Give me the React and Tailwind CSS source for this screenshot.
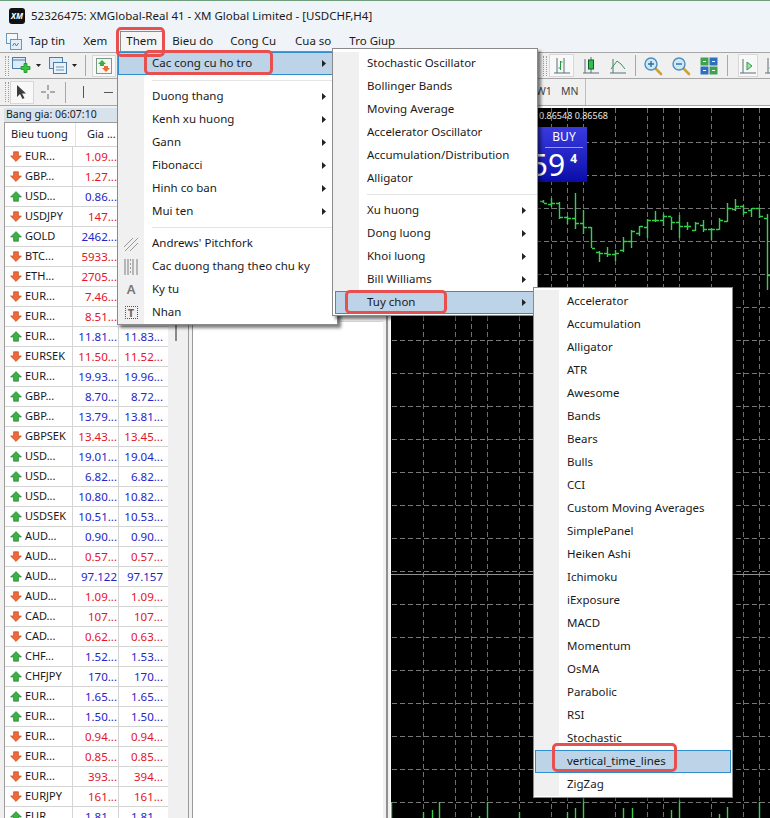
import React from "react";

const rows = [
  ["EUR...", 0, "1.09...", ""], ["GBP...", 0, "1.27...", ""], ["USD...", 1, "0.86...", ""],
  ["USDJPY", 0, "147...", ""], ["GOLD", 1, "2462...", ""], ["BTC...", 0, "5933...", ""],
  ["ETH...", 0, "2705...", ""], ["EUR...", 0, "7.46...", ""], ["EUR...", 0, "8.51...", ""],
  ["EUR...", 1, "11.81...", "11.83..."], ["EURSEK", 0, "11.50...", "11.52..."], ["EUR...", 1, "19.93...", "19.96..."],
  ["GBP...", 1, "8.70...", "8.72..."], ["GBP...", 1, "13.79...", "13.81..."], ["GBPSEK", 0, "13.43...", "13.45..."],
  ["USD...", 1, "19.01...", "19.04..."], ["USD...", 1, "6.82...", "6.82..."], ["USD...", 1, "10.80...", "10.82..."],
  ["USDSEK", 1, "10.51...", "10.53..."], ["AUD...", 1, "0.90...", "0.90..."], ["AUD...", 0, "0.57...", "0.57..."],
  ["AUD...", 1, "97.122", "97.157"], ["AUD...", 0, "1.09...", "1.09..."], ["CAD...", 0, "107...", "107..."],
  ["CAD...", 0, "0.62...", "0.63..."], ["CHF...", 1, "1.52...", "1.53..."], ["CHFJPY", 1, "170...", "170..."],
  ["EUR...", 1, "1.65...", "1.65..."], ["EUR...", 1, "1.50...", "1.50..."], ["EUR...", 0, "0.94...", "0.94..."],
  ["EUR...", 0, "0.85...", "0.85..."], ["EUR...", 0, "393...", "394..."], ["EURJPY", 0, "161...", "161..."],
  ["EUR...", 1, "1.81...", "1.81..."],
];

// [x, top, bottom, open, close] in page pixels
const bars = [
  [543, 200, 203, 201, 203], [551, 198, 207, 204, 203], [559, 202, 219, 203, 217], [567, 216, 224, 217, 218],
  [575, 193, 229, 218, 223], [583, 210, 234, 223, 227], [591, 227, 248, 227, 248], [599, 251, 262, 252, 253],
  [607, 247, 257, 253, 254], [615, 250, 261, 254, 253], [623, 237, 252, 250, 241], [631, 230, 248, 241, 231],
  [639, 226, 236, 233, 226], [647, 219, 238, 227, 220], [655, 211, 222, 220, 220], [663, 214, 226, 220, 216],
  [671, 217, 230, 216, 222], [679, 215, 238, 222, 226], [687, 222, 230, 226, 226], [695, 222, 231, 230, 223],
  [703, 220, 232, 225, 229], [711, 228, 240, 229, 229], [719, 218, 230, 229, 220], [727, 203, 222, 221, 208],
  [735, 199, 211, 209, 206], [743, 205, 215, 206, 212], [751, 208, 217, 210, 208], [759, 208, 218, 208, 216],
  [767, 214, 290, 218, 275],
];
const lowBars = [
  [391, 802], [423, 812], [432, 810], [439, 802], [479, 816], [487, 802], [519, 812], [567, 812], [575, 808],
  [583, 798], [623, 808], [632, 808], [671, 810], [679, 800], [719, 814], [727, 807], [759, 802],
];
const hLines = [142, 175, 208, 241, 274, 307, 340, 373, 406, 439, 472, 505, 538, 571, 604, 637, 670, 703, 736, 769, 802];

const ArrowUp = () => (
  <svg width="12" height="11" viewBox="0 0 12 11" className="shrink-0">
    <path d="M6 .6 11.4 6H8.4V10.2H3.6V6H.6Z" fill="#3cb043" stroke="#1f7f34" strokeWidth=".7" />
  </svg>
);

const ArrowDown = () => (
  <svg width="12" height="11" viewBox="0 0 12 11" className="shrink-0">
    <path d="M6 10.4 11.4 5H8.4V.8H3.6V5H.6Z" fill="#f0693a" stroke="#bd4a1e" strokeWidth=".7" />
  </svg>
);

const Caret = () => (
  <svg width="5" height="3" viewBox="0 0 5 3" className="ml-[5px] shrink-0">
    <path d="M0 0H5L2.5 3Z" fill="#222" />
  </svg>
);

const Grip = () => <div className="w-[4px] h-[20px] border-x border-dotted border-[#9a9a9a] shrink-0" />;
const Sep = () => <div className="w-px h-[21px] bg-[#a8a8a8] shrink-0" />;

const ChartBars = () => (
  <svg width="20" height="20" viewBox="0 0 20 20">
    <path d="M2 17H18M5 17V2M12 17V2" stroke="#58707a" fill="none" />
    <path d="M8.5 5V14M8.5 12H6.5M8.5 6H10.5" stroke="#1e9c3e" fill="none" />
  </svg>
);

const Candle = () => (
  <svg width="20" height="20" viewBox="0 0 20 20">
    <path d="M2 17H18M4 17V3M10 17V1" stroke="#58707a" fill="none" />
    <rect x="7.5" y="4" width="5" height="9" fill="#2fc04e" stroke="#145c26" />
  </svg>
);

const LineChart = () => (
  <svg width="20" height="20" viewBox="0 0 20 20">
    <path d="M2 17H18M5 17V3" stroke="#58707a" fill="none" />
    <path d="M3 13 9 5 13 8 17 13" stroke="#2f9f49" fill="none" />
  </svg>
);

const Magnifier = ({ plus }) => (
  <svg width="20" height="20" viewBox="0 0 20 20">
    <path d="M12 12 18 18" stroke="#c9a33a" strokeWidth="2.6" strokeLinecap="round" />
    <circle cx="8" cy="8" r="6" fill="#cfe8f7" stroke="#4d8fbd" strokeWidth="1.4" />
    <path d={plus ? "M5 8H11M8 5V11" : "M5 8H11"} stroke="#2a6f9f" strokeWidth="1.4" />
  </svg>
);

const Tile = () => (
  <svg width="18" height="18" viewBox="0 0 18 18">
    <rect x=".5" y=".5" width="8" height="8" fill="#3fa34d" />
    <rect x="9.5" y=".5" width="8" height="8" fill="#2e6fc0" />
    <rect x=".5" y="9.5" width="8" height="8" fill="#2e6fc0" />
    <rect x="9.5" y="9.5" width="8" height="8" fill="#3fa34d" />
    <path d="M3 4.5H6M12 4.5H15M3 13.5H6M12 13.5H15" stroke="#fff" />
  </svg>
);

const Shift = () => (
  <svg width="18" height="20" viewBox="0 0 18 20">
    <path d="M1 17H17M4 17V3" stroke="#58707a" fill="none" />
    <path d="M8 6 13 10 8 14Z" fill="#a5e0a5" stroke="#2f9f49" />
  </svg>
);

const NewChart = () => (
  <svg width="19" height="18" viewBox="0 0 19 18" className="shrink-0">
    <rect x=".5" y=".5" width="13" height="11" fill="#dcebf7" stroke="#4b7ea8" />
    <path d="M.5 3H13.5" stroke="#4b7ea8" />
    <path d="M9 9.5H12V6.5H15V9.5H18V12.5H15V15.5H12V12.5H9Z" fill="#38c63f" stroke="#1d8a2d" strokeWidth=".8" />
  </svg>
);

const Profiles = () => (
  <svg width="18" height="18" viewBox="0 0 18 18" className="shrink-0">
    <rect x=".5" y=".5" width="13" height="11" fill="#dcebf7" stroke="#4b7ea8" />
    <rect x="4.5" y="5.5" width="13" height="11" fill="#e8f2fa" stroke="#4b7ea8" />
    <path d="M7 10H15M7 13H15" stroke="#6b93b5" />
  </svg>
);

const Watch = () => (
  <svg width="16" height="16" viewBox="0 0 16 16">
    <rect x=".5" y=".5" width="15" height="15" fill="#f2f7f2" stroke="#7a9a88" />
    <path d="M6 2 10 6H8V8H4V6H2Z" fill="#3cb043" />
    <path d="M10 14 14 10H12V8H8V10H6Z" fill="#f0693a" />
  </svg>
);

const AppIcon = () => (
  <svg width="16" height="18" viewBox="0 0 16 18" className="shrink-0">
    <rect x=".5" y=".5" width="11" height="10" fill="#f3f8fc" stroke="#6d93b5" />
    <rect x="4.5" y="6.5" width="11" height="10" fill="#e3eff8" stroke="#6d93b5" />
    <path d="M6.5 13 8.5 10 10.5 13 12.5 10" stroke="#4d7fa8" fill="none" />
  </svg>
);

const Pitchfork = () => (
  <svg width="16" height="16" viewBox="0 0 16 16">
    <path d="M1 11 10 2M2 15 15 2M7 15 15 7" stroke="#9a9a9a" fill="none" />
  </svg>
);

const Cycles = () => (
  <svg width="16" height="18" viewBox="0 0 16 18">
    <path d="M2 1V17M5 1V17M10 1V17M14 1V17" stroke="#7d7d7d" fill="none" />
    <path d="M7.5 1V17" stroke="#9a9a9a" strokeDasharray="2 2" />
  </svg>
);

const Submenu = () => (
  <svg width="4" height="7" viewBox="0 0 4 7" className="shrink-0">
    <path d="M0 0 4 3.5 0 7Z" fill="#222" />
  </svg>
);

const MenuItem = ({ label, arrow, active, icon, gutter, text, arrowRight }) => (
  <div className={`flex items-center h-[23px] ${active ? "bg-[#bdd3e7] outline outline-1 -outline-offset-1 outline-[#2f8ecb]" : ""}`}>
    <div className={`${gutter} h-full flex items-center justify-center shrink-0 ${active ? "" : "bg-[#f0f0f0]"}`}>
      {icon}
    </div>
    <span className={`${text} flex-1 whitespace-nowrap pb-[2px]`}>{label}</span>
    {arrow && <div className={arrowRight}><Submenu /></div>}
  </div>
);

const MenuSep = ({ gutter, h }) => (
  <div className={`flex ${h}`}>
    <div className={`${gutter} bg-[#f0f0f0] shrink-0`} />
    <div className="flex-1 flex items-center ml-2">
      <div className="w-full h-px bg-[#e4e4e4]" />
    </div>
  </div>
);

const Box = ({ className }) => (
  <div className={`absolute border-[3px] border-[#e8504f] rounded-[5px] pointer-events-none ${className}`} />
);

const App = () => {
  const m1 = { gutter: "w-[26px]", text: "pl-[8px]", arrowRight: "pr-[11px]" };
  const m2 = { gutter: "w-[26px]", text: "pl-[8px]", arrowRight: "pr-[11px]" };
  const m3 = { gutter: "w-[25px]", text: "pl-[8px]" };

  return (
    <div className="relative w-[770px] h-[818px] overflow-hidden bg-[#f0f0f0] text-[#1a1a1a] text-[11.5px] font-['Noto_Sans',sans-serif]">
      {/* タイトルバー */}
      <div className="h-[31px] bg-[#eff4f9] border-t border-[#6f9c7c] flex items-center pl-[9px] gap-[6px]">
        <div className="w-[16px] h-[16px] rounded-[3px] bg-[#111] flex items-center justify-center text-white text-[8px] font-bold italic leading-none">XM</div>
        <span className="text-[11.5px] whitespace-nowrap">52326475: XMGlobal-Real 41 - XM Global Limited - [USDCHF,H4]</span>
      </div>

      {/* メニューバー */}
      <div className="h-[21px] bg-[#f0f4f9] flex items-center pl-[6px]">
        <AppIcon />
        <span className="ml-[7px] pb-[2px] whitespace-nowrap">Tap tin</span>
        <span className="ml-[18px] pb-[2px] whitespace-nowrap">Xem</span>
        <div className="ml-[13px] w-[43px] h-[21px] pb-[2px] border border-[#8a8a8a] border-b-0 bg-[#f5f5f5] flex items-center justify-center shrink-0">Them</div>
        <span className="ml-[9px] pb-[2px] whitespace-nowrap">Bieu do</span>
        <span className="ml-[17px] pb-[2px] whitespace-nowrap">Cong Cu</span>
        <span className="ml-[19px] pb-[2px] whitespace-nowrap">Cua so</span>
        <span className="ml-[18px] pb-[2px] whitespace-nowrap">Tro Giup</span>
      </div>

      {/* ツールバー1 */}
      <div className="h-[27px] border-y border-[#a6a6a6] flex items-center pl-[5px]">
        <Grip />
        <div className="ml-[3px] flex items-center shrink-0"><NewChart /><Caret /></div>
        <div className="ml-[8px] flex items-center shrink-0"><Profiles /><Caret /></div>
        <div className="ml-[8px] shrink-0"><Sep /></div>
        <div className="ml-[6px] w-[24px] h-[22px] bg-[#f8f8f8] border border-[#d8d8d8] flex items-center justify-center shrink-0"><Watch /></div>
        <div className="ml-[427px] shrink-0"><Grip /></div>
        <div className="ml-[2px] w-[25px] h-[23px] bg-[#f8f8f8] border border-[#d8d8d8] flex items-center justify-center shrink-0"><ChartBars /></div>
        <div className="ml-[5px] w-[24px] flex justify-center shrink-0"><Candle /></div>
        <div className="ml-[3px] w-[24px] flex justify-center shrink-0"><LineChart /></div>
        <div className="ml-[5px] shrink-0"><Sep /></div>
        <div className="ml-[5px] w-[24px] flex justify-center shrink-0"><Magnifier plus /></div>
        <div className="ml-[4px] w-[24px] flex justify-center shrink-0"><Magnifier /></div>
        <div className="ml-[4px] w-[24px] flex justify-center shrink-0"><Tile /></div>
        <div className="ml-[6px] shrink-0"><Sep /></div>
        <div className="ml-[10px] w-[20px] h-[23px] bg-[#f8f8f8] border border-[#d8d8d8] flex items-center justify-center shrink-0"><Shift /></div>
        <div className="ml-[5px] shrink-0"><ChartBars /></div>
      </div>

      {/* ツールバー2 */}
      <div className="h-[27px] border-b border-[#a6a6a6] flex items-center pl-[5px]">
        <Grip />
        <div className="ml-[1px] w-[24px] h-[23px] bg-[#f8f8f8] border border-[#d8d8d8] flex items-center justify-center shrink-0">
          <svg width="12" height="16" viewBox="0 0 12 16"><path d="M1 1V13L4 10 6.5 15 8.5 14 6 9.5H10Z" fill="#3c3c3c" /></svg>
        </div>
        <div className="ml-[6px] w-[16px] h-[16px] flex items-center justify-center shrink-0">
          <svg width="16" height="16" viewBox="0 0 16 16"><path d="M8 1V6M8 10V15M1 8H6M10 8H15" stroke="#666" /></svg>
        </div>
        <div className="ml-[9px] shrink-0"><Sep /></div>
        <div className="ml-[17px] w-px h-[12px] bg-[#555] shrink-0" />
        <div className="ml-[20px] w-[9px] h-px bg-[#555] shrink-0" />
        <div className="ml-[423px] text-[10.5px] text-[#444] w-[18px] shrink-0">W1</div>
        <div className="ml-[7px] text-[10.5px] text-[#444] shrink-0">MN</div>
        <div className="ml-[6px] w-px h-[26px] bg-[#bcbcbc] shrink-0" />
      </div>

      <div className="flex h-[712px]">
        {/* 気配値 */}
        <div className="w-[189px] shrink-0 border-r border-[#9a9a9a] pl-[4px] pt-[2px]">
          <div className="h-[14px] bg-[#d8e2ed] flex items-center pl-[2px] text-[10.5px] whitespace-nowrap">Bang gia: 06:07:10</div>
          <div className="flex">
            <div className="w-[164px] shrink-0 bg-white border-l border-t border-[#9c9c9c]">
              <div className="h-[24px] flex items-center border-b border-[#d4d4d4] text-[11px]">
                <div className="w-[70px] pl-[6px] whitespace-nowrap">Bieu tuong</div>
                <div className="border-l border-[#e2e2e2] pl-[11px] h-full flex items-center">Gia ...</div>
              </div>
              {rows.map(([symbol, up, bid, ask], i) => (
                <div key={i} className={`h-[20px] flex items-center border-b border-[#d4d4d4] ${up ? "text-[#2525c4]" : "text-[#e31428]"}`}>
                  <div className="w-[68px] h-full flex items-center pl-[5px] gap-[3px] text-[#1a1a1a] text-[11px] border-r border-[#d4d4d4] shrink-0">
                    {up ? <ArrowUp /> : <ArrowDown />}
                    <span className="whitespace-nowrap">{symbol}</span>
                  </div>
                  <div className="w-[46px] h-full flex items-center justify-end pr-[1px] border-r border-[#d4d4d4] shrink-0 whitespace-nowrap">{bid}</div>
                  <div className="w-[48px] h-full flex items-center justify-end pr-[4px] shrink-0 whitespace-nowrap">{ask}</div>
                </div>
              ))}
            </div>
            <div className="ml-[7px] mt-[178px] w-[2px] h-[41px] bg-[#8a8a8a]" />
          </div>
        </div>

        {/* 中央パネル */}
        <div className="w-[201px] shrink-0 pl-[3px] pr-[2px]">
          <div className="h-full flex flex-col border-r-2 border-[#8f8f8f] pr-[3px]">
            <div className="h-[215px] shrink-0" />
            <div className="flex-1 bg-white border-l border-t border-l-[#9a9a9a] border-t-[#d8d8d8]" />
          </div>
        </div>

        {/* チャート */}
        <div className="relative flex-1 bg-black border-t-2 border-l border-white">
          <svg width="379" height="710" viewBox="391 108 379 710" className="block">
            {[423, 455, 487, 519, 551, 583, 615, 647, 679, 711, 743].map((x) => (
              <path key={x} d={`M${x + 0.5} 108V818`} stroke="#6c6c6c" strokeDasharray="5 3" />
            ))}
            {[423, 471, 519, 567, 615, 663, 711, 759].map((x) => (
              <path key={x} d={`M${x + 0.5} 108V818`} stroke="#4f75ab" strokeDasharray="5 3" />
            ))}
            {hLines.map((y) => (
              <path key={y} d={`M392 ${y + 0.5}H770`} stroke="#787878" strokeDasharray="5 3" />
            ))}
            <path d="M391 574.5H770" stroke="#909090" />
            {bars.map(([x, top, bottom, open, close]) => (
              <path key={x} d={`M${x + 0.5} ${top}V${bottom}M${x - 3} ${open + 0.5}H${x}M${x + 1} ${close + 0.5}H${x + 4}`} stroke="#35d04a" strokeWidth="1.4" fill="none" />
            ))}
            {lowBars.map(([x, top]) => (
              <path key={x} d={`M${x + 0.5} ${top}V818`} stroke="#35d04a" strokeWidth="1.4" />
            ))}
          </svg>
          <div className="absolute left-[148px] top-[1px] text-[#e8e8e8] text-[9px] leading-[14px] whitespace-nowrap">0.86548 0.86568</div>
          <div className="absolute left-[139px] top-[19px] w-[57px] h-[55px] bg-gradient-to-b from-[#3a3ae0] to-[#0a0aa8] text-white">
            <div className="ml-[15px] w-[38px] text-[12px] h-[21px] flex items-center justify-center border-b border-[#9a9af0]">BUY</div>
            <div className="flex justify-end items-start pr-[10px]">
              <span className="text-[30px] leading-[34px]">59</span>
              <span className="text-[12px] ml-[5px] mt-[2px] font-bold">4</span>
            </div>
          </div>
        </div>
      </div>

      {/* メニュー1 */}
      <div className="absolute left-[117px] top-[51px] w-[221px] bg-white border border-[#8a8a8a] shadow-[3px_3px_3px_rgba(0,0,0,0.5)]">
        <MenuItem {...m1} label="Cac cong cu ho tro" arrow active />
        <MenuSep gutter="w-[26px]" h="h-[10px]" />
        <MenuItem {...m1} label="Duong thang" arrow />
        <MenuItem {...m1} label="Kenh xu huong" arrow />
        <MenuItem {...m1} label="Gann" arrow />
        <MenuItem {...m1} label="Fibonacci" arrow />
        <MenuItem {...m1} label="Hinh co ban" arrow />
        <MenuItem {...m1} label="Mui ten" arrow />
        <MenuSep gutter="w-[26px]" h="h-[9px]" />
        <MenuItem {...m1} label="Andrews' Pitchfork" icon={<Pitchfork />} />
        <MenuItem {...m1} label="Cac duong thang theo chu ky" icon={<Cycles />} />
        <MenuItem {...m1} label="Ky tu" icon={<span className="text-[13px] font-semibold text-[#777]">A</span>} />
        <MenuItem {...m1} label="Nhan" icon={<span className="w-[13px] h-[13px] border border-dotted border-[#555] flex items-center justify-center text-[11px] font-bold text-[#666] leading-none">T</span>} />
      </div>

      {/* メニュー2 */}
      <div className="absolute left-[332px] top-[48px] w-[206px] bg-white border border-[#8a8a8a] pt-[3px] pb-px shadow-[3px_3px_3px_rgba(0,0,0,0.5)]">
        {["Stochastic Oscillator", "Bollinger Bands", "Moving Average", "Accelerator Oscillator", "Accumulation/Distribution", "Alligator"].map((name) => (
          <MenuItem key={name} {...m2} label={name} />
        ))}
        <MenuSep gutter="w-[26px]" h="h-[9px]" />
        {["Xu huong", "Dong luong", "Khoi luong", "Bill Williams"].map((name) => (
          <MenuItem key={name} {...m2} label={name} arrow />
        ))}
        <div className="pl-[2px]">
          <MenuItem gutter="w-[24px]" text="pl-[8px]" arrowRight="pr-[11px]" label="Tuy chon" arrow active />
        </div>
      </div>

      {/* メニュー3 */}
      <div className="absolute left-[533px] top-[287px] w-[200px] bg-white border border-[#8a8a8a] pt-[2px] pb-px shadow-[3px_3px_3px_rgba(0,0,0,0.4)]">
        {["Accelerator", "Accumulation", "Alligator", "ATR", "Awesome", "Bands", "Bears", "Bulls", "CCI", "Custom Moving Averages", "SimplePanel", "Heiken Ashi", "Ichimoku", "iExposure", "MACD", "Momentum", "OsMA", "Parabolic", "RSI", "Stochastic"].map((name) => (
          <MenuItem key={name} {...m3} label={name} />
        ))}
        <div className="px-[1px]">
          <MenuItem gutter="w-[24px]" text="pl-[8px]" label="vertical_time_lines" active />
        </div>
        <MenuItem {...m3} label="ZigZag" />
      </div>

      {/* 赤枠 */}
      <Box className="left-[116px] top-[27px] w-[49px] h-[30px]" />
      <Box className="left-[144px] top-[50px] w-[129px] h-[25px]" />
      <Box className="left-[345px] top-[290px] w-[102px] h-[24px]" />
      <Box className="left-[552px] top-[743px] w-[125px] h-[29px]" />
    </div>
  );
};

export default App;
